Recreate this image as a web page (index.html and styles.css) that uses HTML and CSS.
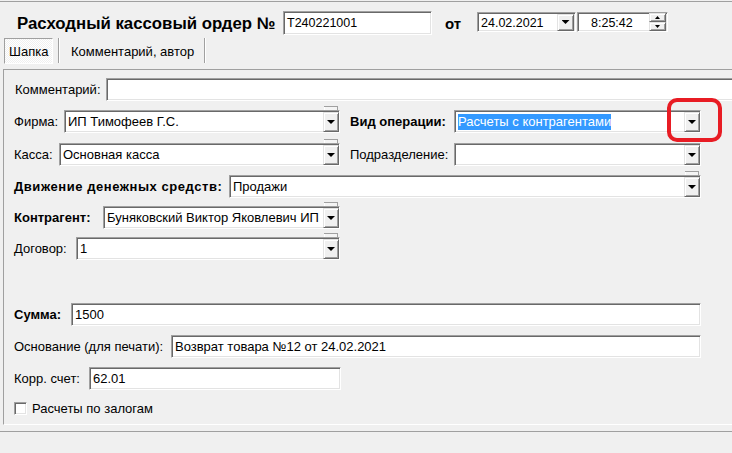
FILE: index.html
```html
<!DOCTYPE html>
<html lang="ru">
<head>
<meta charset="utf-8">
<title>Расходный кассовый ордер</title>
<link rel="stylesheet" href="styles.css">
</head>
<body>
<div class="app">
  <header class="head">
    <h1 class="title">Расходный кассовый ордер №</h1>
    <div class="field num">T240221001</div>
    <span class="ot">от</span>
    <div class="field date"><span class="val">24.02.2021</span><span class="btn dd small"><i class="tri"></i></span></div>
    <div class="field time"><span class="val tval">8:25:42</span><span class="spin"><span class="btn sp"><i class="tri mini up"></i></span><span class="btn sp"><i class="tri mini"></i></span></span></div>
  </header>

  <nav class="tabs">
    <div class="tab active">Шапка</div>
    <div class="sep"></div>
    <div class="tab">Комментарий, автор</div>
    <div class="sep"></div>
  </nav>

  <section class="panel">
    <div class="row r-comment">
      <span class="lbl w-comment">Комментарий:</span>
      <div class="field grow"></div>
    </div>

    <div class="row">
      <div class="half">
        <span class="lbl w-firm">Фирма:</span>
        <div class="field combo grow"><span class="val">ИП Тимофеев Г.С.</span><span class="btn dd"><i class="tri"></i></span><span class="cap"></span></div>
      </div>
      <div class="half right">
        <span class="lbl b w-op">Вид операции:</span>
        <div class="field combo grow"><span class="val"><span class="sel">Расчеты с контрагентами</span></span><span class="btn dd"><i class="tri"></i></span><span class="mark"></span></div>
      </div>
    </div>

    <div class="row mt10">
      <div class="half">
        <span class="lbl w-kassa">Касса:</span>
        <div class="field combo grow"><span class="val">Основная касса</span><span class="btn dd"><i class="tri"></i></span><span class="cap"></span></div>
      </div>
      <div class="half right">
        <span class="lbl w-op">Подразделение:</span>
        <div class="field combo grow"><span class="val"></span><span class="btn dd"><i class="tri"></i></span></div>
      </div>
    </div>

    <div class="row">
      <span class="lbl b wide w-dds">Движение денежных средств:</span>
      <div class="field combo grow"><span class="val">Продажи</span><span class="btn dd"><i class="tri"></i></span><span class="cap"></span></div>
    </div>

    <div class="row narrow mt8">
      <span class="lbl b w-kontr">Контрагент:</span>
      <div class="field combo grow"><span class="val">Буняковский Виктор Яковлевич ИП</span><span class="btn dd"><i class="tri"></i></span><span class="cap"></span></div>
    </div>

    <div class="row narrow mt8">
      <span class="lbl w-dog">Договор:</span>
      <div class="field combo grow"><span class="val">1</span><span class="btn dd"><i class="tri"></i></span><span class="cap"></span></div>
    </div>

    <div class="row mt43">
      <span class="lbl b w-sum">Сумма:</span>
      <div class="field grow"><span class="val">1500</span></div>
    </div>

    <div class="row">
      <span class="lbl w-osn">Основание (для печати):</span>
      <div class="field grow"><span class="val">Возврат товара №12 от 24.02.2021</span></div>
    </div>

    <div class="row narrow1">
      <span class="lbl w-korr">Корр. счет:</span>
      <div class="field grow"><span class="val">62.01</span></div>
    </div>

    <div class="row chk">
      <span class="box"></span>
      <span class="chk-lbl">Расчеты по залогам</span>
    </div>
  </section>

  <div class="bottom"></div>
</div>
</body>
</html>
```

FILE: styles.css
```css
* { box-sizing: border-box; }
html, body { margin: 0; padding: 0; }
body {
  width: 732px;
  height: 453px;
  overflow: hidden;
  background: #f0f0f0;
  font-family: "Liberation Sans", Arial, sans-serif;
  font-size: 13px;
  color: #000;
}
.app {
  width: 820px;
  margin-top: 1px;
  border-top: 1px solid #a0a0a0;
}

/* header */
.head {
  display: flex;
  align-items: flex-start;
  height: 36px;
}
.title {
  margin: 11px 0 0 17px;
  width: 266px;
  font-size: 16.8px;
  font-weight: bold;
  line-height: 22px;
  white-space: nowrap;
  overflow: hidden;
}
.field {
  position: relative;
  display: flex;
  align-items: center;
  background: #fff;
  border: 1px solid;
  border-color: #a0a0a0 #fff #fff #a0a0a0;
  box-shadow: inset 1px 1px 0 #696969, inset -1px -1px 0 #e3e3e3;
  padding-left: 3px;
  white-space: nowrap;
  height: 23px;
}
.num {
  margin-top: 9px;
  width: 149px;
  height: 24px;
  font-size: 12.5px;
}
.ot {
  margin: 12px 0 0 13px;
  width: 32px;
  font-size: 15px;
  font-weight: bold;
  line-height: 20px;
}
.date, .time {
  margin-top: 10px;
  height: 20px;
  font-size: 12.5px;
  align-items: flex-end;
}
.date { width: 99px; }
.time { width: 91px; margin-left: 1px; }
.date .val { flex: 1; line-height: 16px; }
.time .tval { flex: 1; padding-left: 10px; line-height: 16px; }
.spin {
  display: flex;
  flex-direction: column;
  align-self: center;
  margin-right: 1px;
}
.btn.sp { width: 17px; height: 9px; }

/* buttons */
.btn {
  flex: none;
  display: flex;
  align-items: center;
  justify-content: center;
  background: #f0f0f0;
  border: 1px solid;
  border-color: #e3e3e3 #696969 #696969 #e3e3e3;
  box-shadow: inset 1px 1px 0 #fff, inset -1px -1px 0 #a0a0a0;
}
.btn.dd {
  width: 16px;
  height: 20px;
  align-self: flex-end;
}
.btn.dd.small {
  width: 17px;
  height: 17px;
  align-self: center;
  margin-right: 1px;
}
.tri {
  display: block;
  width: 8px;
  height: 4px;
  background: #000;
  clip-path: polygon(0 0, 100% 0, 50% 100%);
}
.tri.mini { width: 5px; height: 3px; }
.tri.mini.up { clip-path: polygon(50% 0, 100% 100%, 0 100%); }

/* tabs */
.tabs {
  display: flex;
  height: 26px;
  padding-left: 4px;
}
.tab {
  display: flex;
  align-items: center;
  padding: 0 10px 0 11px;
  height: 26px;
  white-space: nowrap;
}
.tab.active {
  width: 49px;
  padding: 0 0 0 4px;
  border: 1px solid;
  border-color: #a0a0a0 #fff #fff #a0a0a0;
  background: repeating-conic-gradient(#ffffff 0 25%, #f0f0f0 0 50%) 0 0 / 2px 2px;
}
.sep {
  width: 2px;
  height: 25px;
  border-left: 1px solid #a0a0a0;
  border-right: 1px solid #fff;
}
.tab.active + .sep { margin-left: 5px; }

/* panel */
.panel {
  margin: 5px 0 0 3px;
  border-top: 1px solid #a0a0a0;
  border-left: 1px solid #a0a0a0;
  border-bottom: 1px solid #fff;
  padding: 8px 0 9px 10px;
}
.row {
  display: flex;
  align-items: center;
  width: 687px;
  height: 23px;
  margin-top: 9px;
}
.row:first-child { margin-top: 0; }
.mt8 { margin-top: 8px; }
.mt10 { margin-top: 10px; }
.mt43 { margin-top: 43px; }
.r-comment { width: 740px; }
.narrow { width: 326px; }
.narrow1 { width: 327px; }
.half {
  display: flex;
  align-items: center;
  width: 326px;
  height: 23px;
}
.half.right {
  width: 351px;
  margin-left: 10px;
}
.lbl {
  flex: none;
  white-space: nowrap;
}
.lbl.b { font-weight: bold; }
.lbl.wide { letter-spacing: 0.55px; }
.w-comment { width: 92px; padding-left: 1px; }
.w-firm { width: 50px; }
.w-kassa { width: 45px; }
.w-op { width: 104px; }
.w-dds { width: 215px; }
.w-kontr { width: 89px; }
.w-dog { width: 62px; }
.w-sum { width: 57px; }
.w-osn { width: 157px; }
.w-korr { width: 75px; }
.grow { flex: 1; }
.val {
  flex: 1;
  overflow: hidden;
  line-height: 16px;
}
.combo .val { padding-top: 1px; }
.sel {
  background: #3399ff;
  color: #fff;
  display: inline-block;
  margin-left: -1px;
  padding-left: 1px;
}
.cap {
  position: absolute;
  right: 1px;
  top: -5px;
  width: 14px;
  height: 4px;
  background: #f4f4f4;
  border-top: 1px solid #a0a0a0;
  border-right: 1px solid #a0a0a0;
  box-shadow: inset 1px 0 0 #fff;
}
.mark {
  position: absolute;
  left: 212px;
  top: -13px;
  width: 55px;
  height: 44px;
  border: 4px solid #e81c24;
  border-radius: 10px;
}

/* checkbox */
.row.chk {
  height: 13px;
  margin-top: 12px;
}
.box {
  width: 13px;
  height: 13px;
  background: #fff;
  border: 1px solid;
  border-color: #a0a0a0 #fff #fff #a0a0a0;
  box-shadow: inset 1px 1px 0 #696969, inset -1px -1px 0 #e3e3e3;
}
.chk-lbl { margin-left: 5px; white-space: nowrap; }

.bottom {
  margin-top: 6px;
  border-top: 1px solid #a0a0a0;
}
```
